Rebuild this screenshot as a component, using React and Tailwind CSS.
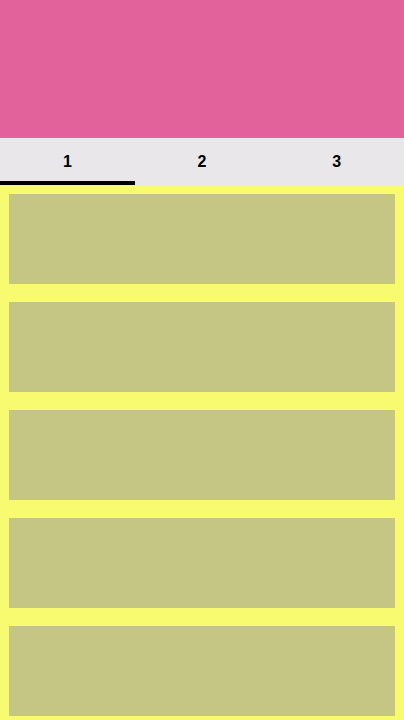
export default function App() {
  const cards = [0, 1, 2, 3, 4];
  return (
    <div className="w-[404px] h-[720px] overflow-hidden flex flex-col" style={{ fontFamily: '"Liberation Sans", Arial, sans-serif' }}>
      <div className="h-[138px] bg-[#e2639c] shrink-0" />
      <div className="h-[48px] bg-[#e9e7ea] shrink-0 grid grid-cols-3 relative">
        {["1", "2", "3"].map((t, i) => (
          <div key={t} className="relative flex items-center justify-center">
            <span className="text-[16px] font-bold text-black">{t}</span>
            {i === 0 && <div className="absolute left-0 right-0 bottom-[1px] h-[4px] bg-black" />}
          </div>
        ))}
      </div>
      <div className="flex-1 bg-[#f8fa6f] px-[9px] pt-[8px] flex flex-col gap-[18px]">
        {cards.map((c) => (
          <div key={c} className="h-[90px] bg-[#c6c684] shrink-0" />
        ))}
      </div>
    </div>
  );
}
